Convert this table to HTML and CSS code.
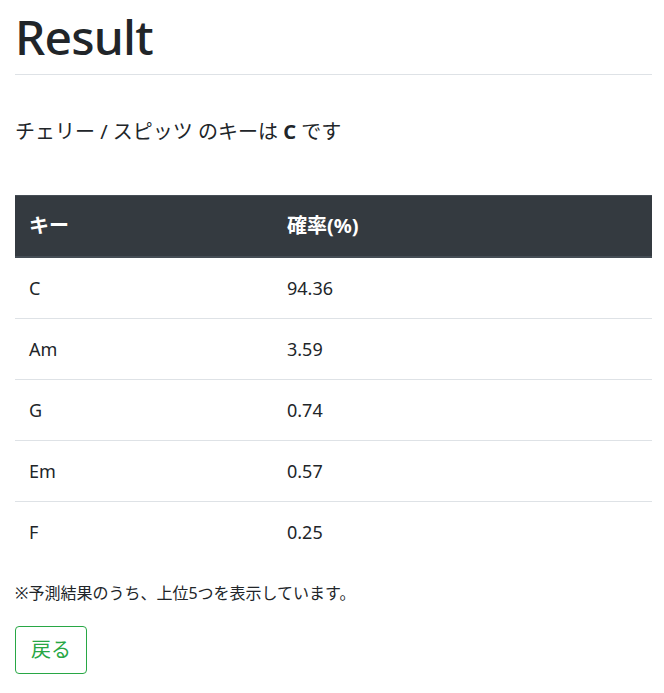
FILE: index.html
```html
<!DOCTYPE html>
<html lang="ja">
<head>
<meta charset="utf-8">
<title>Result</title>
<link rel="stylesheet" href="styles.css">
</head>
<body>
<div class="container">
  <h1 class="title">Result</h1>
  <p class="lead">チェリー / スピッツ のキーは <strong>C</strong> です</p>
  <table class="table">
    <thead>
      <tr><th class="col-key">キー</th><th>確率(%)</th></tr>
    </thead>
    <tbody>
      <tr><td>C</td><td>94.36</td></tr>
      <tr><td>Am</td><td>3.59</td></tr>
      <tr><td>G</td><td>0.74</td></tr>
      <tr><td>Em</td><td>0.57</td></tr>
      <tr><td>F</td><td>0.25</td></tr>
    </tbody>
  </table>
  <p class="note">※予測結果のうち、上位5つを表示しています。</p>
  <a class="btn-back" href="#">戻る</a>
</div>
</body>
</html>
```
FILE: styles.css
```css
* { box-sizing: border-box; }
html, body { margin: 0; padding: 0; }
body {
  font-family: "Noto Sans", "Noto Sans CJK JP", sans-serif;
  color: #212529;
  background: #fff;
  font-size: 18px;
  line-height: 1.5;
}
.container {
  padding: 0 12px 0 15px;
}
.title {
  font-size: 48px;
  font-weight: 500;
  letter-spacing: -0.8px;
  line-height: 1.2;
  margin: 8px 0 0;
  padding-bottom: 8px;
  border-bottom: 1px solid #dee2e6;
}
.lead {
  font-size: 20px;
  margin: 42px 0 0;
  line-height: 30px;
}
.lead strong { font-weight: 700; }
.table {
  width: 100%;
  border-collapse: collapse;
  margin-top: 48px;
  font-size: 18px;
}
.table th, .table td {
  text-align: left;
  padding: 16px 14px;
  line-height: 28px;
  border-top: 1px solid #dee2e6;
}
.table thead th {
  background: #343a40;
  color: #fff;
  font-size: 20px;
  font-weight: 700;
  border-top: 1px solid #454d55;
  border-bottom: 2px solid #454d55;
  padding: 16px 14px;
}
.table tbody tr:first-child td { border-top: none; }
.col-key { width: 258px; }
.note {
  font-size: 16px;
  margin: 19px 0 0;
  line-height: 24px;
}
.btn-back {
  display: inline-block;
  margin-top: 21px;
  font-size: 20px;
  line-height: 30px;
  padding: 8px 15px;
  border: 1px solid #28a745;
  border-radius: 4px;
  color: #28a745;
  text-decoration: none;
}
```
